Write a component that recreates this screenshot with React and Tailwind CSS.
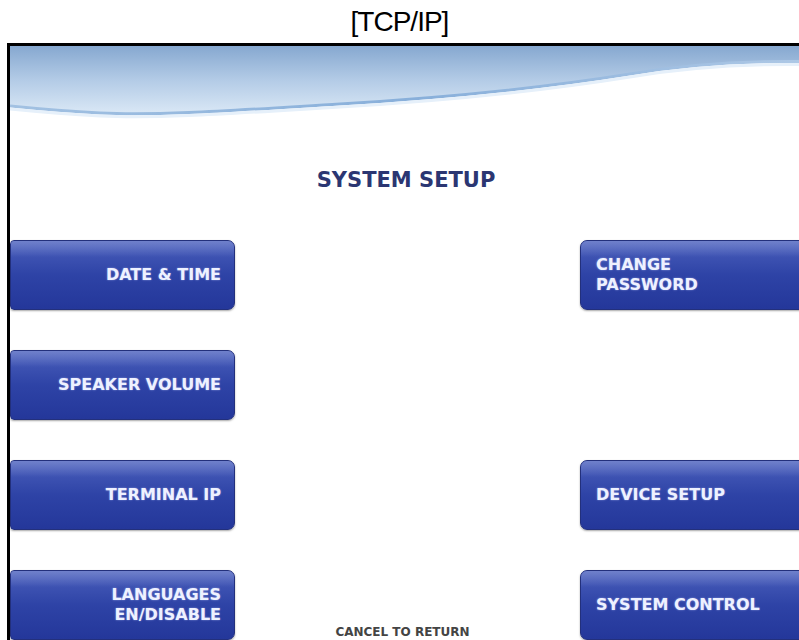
import React from "react";

const Wave = () => (
  <svg width="810" height="90" viewBox="0 0 810 90" className="block">
    <defs>
      <linearGradient id="sky" x1="0" y1="0" x2="0" y2="1">
        <stop offset="0" stopColor="#86a8d0" />
        <stop offset="0.5" stopColor="#b3cbe6" />
        <stop offset="1" stopColor="#dae8f6" />
      </linearGradient>
      <linearGradient id="edge" x1="0" y1="0" x2="1" y2="0">
        <stop offset="0" stopColor="#a2c1e2" />
        <stop offset="0.5" stopColor="#88afda" />
        <stop offset="1" stopColor="#afc9e6" />
      </linearGradient>
    </defs>
    <path
      d="M0 0 H810 V16 C740 14 680 18 620 28 C520 44 430 52 330 58 C230 64 150 70 90 67 C50 65 20 62 0 60 Z"
      fill="url(#sky)"
    />
    <path
      d="M0 60 C20 62 50 65 90 67 C150 70 230 64 330 58 C430 52 520 44 620 28 C680 18 740 14 810 16"
      fill="none"
      stroke="url(#edge)"
      strokeWidth="3"
    />
    <path
      d="M0 63 C20 65 50 68 90 70 C150 73 230 67 330 61 C430 55 520 47 620 31 C680 21 740 17 810 19"
      fill="none"
      stroke="#e6f0fa"
      strokeWidth="3"
    />
  </svg>
);

const AtmButton = ({ side, children }) => (
  <div
    className={`relative h-[70px] w-[225px] overflow-hidden border border-[#23307c] bg-gradient-to-b from-[#4b5fbc] via-[#2e43a6] to-[#24379a] shadow-[0_1px_2px_rgba(0,0,0,0.35)] ${
      side === "left"
        ? "rounded-r-[7px] rounded-l-[4px] flex items-center justify-end pr-[13px] text-right"
        : "w-[240px] rounded-l-[7px] flex items-center justify-start pl-[15px] text-left"
    }`}
  >
    <div className="absolute inset-x-0 top-0 h-[16px] bg-gradient-to-b from-[#7f8fd2] to-transparent opacity-70" />
    <span className="relative font-['DejaVu_Sans',sans-serif] text-[16px] font-bold leading-[20px] text-[#eef1ff] [text-shadow:0_0_2px_rgba(200,210,255,0.6)]">
      {children}
    </span>
  </div>
);

export default function App() {
  return (
    <div className="h-[640px] w-[799px] overflow-hidden bg-white">
      <div className="flex h-[43px] items-center justify-center pt-[1px] font-['Liberation_Sans',sans-serif] text-[28px] tracking-[-1px] text-black">
        [TCP/IP]
      </div>
      <div className="ml-[7px] w-[813px] border-l-[3px] border-t-[3px] border-black bg-white">
        <Wave />
        <div className="flex h-[104px] items-center justify-center pb-[14px] pr-[18px] font-['DejaVu_Sans',sans-serif] text-[21px] font-bold text-[#2b3672]">
          SYSTEM SETUP
        </div>
        <div className="flex flex-col gap-[40px]">
          <div className="flex justify-between">
            <AtmButton side="left">DATE &amp; TIME</AtmButton>
            <AtmButton side="right">
              CHANGE
              <br />
              PASSWORD
            </AtmButton>
          </div>
          <div className="flex justify-between">
            <AtmButton side="left">SPEAKER VOLUME</AtmButton>
          </div>
          <div className="flex justify-between">
            <AtmButton side="left">TERMINAL IP</AtmButton>
            <AtmButton side="right">DEVICE SETUP</AtmButton>
          </div>
          <div className="flex justify-between">
            <AtmButton side="left">
              LANGUAGES
              <br />
              EN/DISABLE
            </AtmButton>
            <div className="flex flex-1 items-end justify-center pr-[10px]">
              <span className="font-['DejaVu_Sans',sans-serif] text-[12px] font-bold leading-[15px] text-[#444444]">
                CANCEL TO RETURN
              </span>
            </div>
            <AtmButton side="right">SYSTEM CONTROL</AtmButton>
          </div>
        </div>
      </div>
    </div>
  );
}
